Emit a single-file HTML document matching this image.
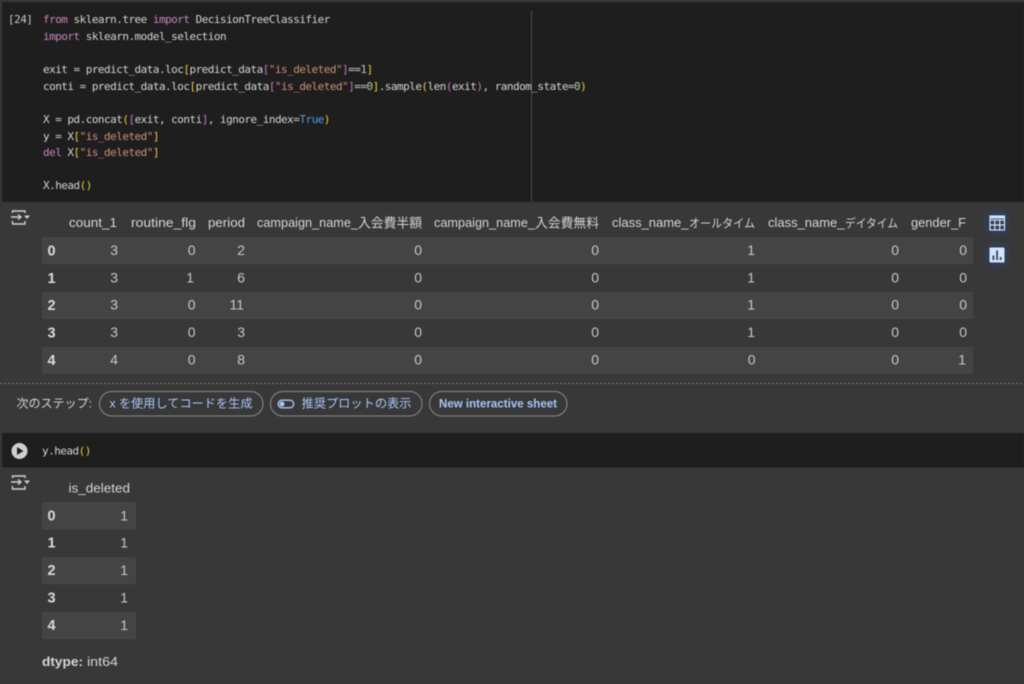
<!DOCTYPE html>
<html lang="ja">
<head>
<meta charset="utf-8">
<title>Notebook</title>
<style>
html,body{margin:0;padding:0;background:#383838;width:1024px;height:684px;overflow:hidden}
svg{display:block;filter:blur(.5px)}
.code{font-family:"DejaVu Sans Mono","Liberation Mono",monospace;font-size:11px;letter-spacing:-.52px;fill:#d4d4d4;white-space:pre}
.k{fill:#c586c0}.s{fill:#ce9178}.n{fill:#b5cea8}.g{fill:#f2cc30}.p{fill:#d070cc}.b{fill:#569cd6}
.ui{font-family:"Liberation Sans","Noto Sans CJK JP",sans-serif;font-size:13px;fill:#d6d6d6}
.cj{font-family:"Noto Sans CJK JP","Liberation Sans",sans-serif;font-size:12px;fill:#d6d6d6}
.idx{font-family:"Liberation Sans",sans-serif;font-size:14.5px;font-weight:700;fill:#dadada}
.num{font-family:"Liberation Sans",sans-serif;font-size:14px;fill:#c8c8c8;text-anchor:end}
.chip{fill:none;stroke:#8b8b8b;stroke-width:1}
.ct{font-family:"Liberation Sans","Noto Sans CJK JP",sans-serif;font-size:12px;fill:#a8c7fa}
</style>
</head>
<body>
<svg xmlns="http://www.w3.org/2000/svg" width="1024" height="684" viewBox="0 0 1024 684">
<rect width="1024" height="684" fill="#383838"/>

<!-- code cell 1 -->
<rect x="2" y="2" width="1022" height="200" fill="#1e1e1e"/>
<rect x="531" y="11" width="1" height="191" fill="#4a4a4a"/>
<text class="code" x="8" y="23" style="fill:#c8c8c8">[24]</text>
<text class="code" xml:space="preserve" x="43" y="23"><tspan class="k">from</tspan> sklearn.tree <tspan class="k">import</tspan> DecisionTreeClassifier</text>
<text class="code" xml:space="preserve" x="43" y="40"><tspan class="k">import</tspan> sklearn.model_selection</text>
<text class="code" xml:space="preserve" x="43" y="73">exit = predict_data.loc<tspan class="g">[</tspan>predict_data<tspan class="p">[</tspan><tspan class="s">"is_deleted"</tspan><tspan class="p">]</tspan>==<tspan class="n">1</tspan><tspan class="g">]</tspan></text>
<text class="code" xml:space="preserve" x="43" y="90">conti = predict_data.loc<tspan class="g">[</tspan>predict_data<tspan class="p">[</tspan><tspan class="s">"is_deleted"</tspan><tspan class="p">]</tspan>==<tspan class="n">0</tspan><tspan class="g">]</tspan>.sample<tspan class="g">(</tspan>len<tspan class="p">(</tspan>exit<tspan class="p">)</tspan>, random_state=<tspan class="n">0</tspan><tspan class="g">)</tspan></text>
<text class="code" xml:space="preserve" x="43" y="123">X = pd.concat<tspan class="g">(</tspan><tspan class="p">[</tspan>exit, conti<tspan class="p">]</tspan>, ignore_index=<tspan class="b">True</tspan><tspan class="g">)</tspan></text>
<text class="code" xml:space="preserve" x="43" y="140">y = X<tspan class="g">[</tspan><tspan class="s">"is_deleted"</tspan><tspan class="g">]</tspan></text>
<text class="code" xml:space="preserve" x="43" y="156"><tspan class="k">del</tspan> X<tspan class="g">[</tspan><tspan class="s">"is_deleted"</tspan><tspan class="g">]</tspan></text>
<text class="code" xml:space="preserve" x="43" y="189">X.head<tspan class="g">()</tspan></text>

<!-- output toggle icon 1 -->
<g fill="none" stroke="#d0d0d0" stroke-width="1.4">
<path d="M12.5 213V211H25V213"/>
<path d="M11 217H21M18 214.5L21 217L18 219.5"/>
<path d="M12.5 221V224H25V221"/>
</g>
<path d="M24 215.5H30L27 219Z" fill="#d0d0d0"/>

<!-- dataframe table -->
<rect x="42" y="237" width="931" height="27.3" fill="#444444"/>
<rect x="42" y="292" width="931" height="27" fill="#444444"/>
<rect x="42" y="347" width="931" height="27" fill="#444444"/>

<text class="ui" x="69" y="227" textLength="48" lengthAdjust="spacingAndGlyphs">count_1</text>
<text class="ui" x="131" y="227" textLength="65" lengthAdjust="spacingAndGlyphs">routine_flg</text>
<text class="ui" x="208" y="227" textLength="37" lengthAdjust="spacingAndGlyphs">period</text>
<text class="ui" x="257" y="227" textLength="101" lengthAdjust="spacingAndGlyphs">campaign_name_</text>
<text class="cj" x="358" y="227.500" textLength="64" lengthAdjust="spacingAndGlyphs" style="font-size:13px">入会費半額</text>
<text class="ui" x="434" y="227" textLength="101" lengthAdjust="spacingAndGlyphs">campaign_name_</text>
<text class="cj" x="535" y="227.500" textLength="64" lengthAdjust="spacingAndGlyphs" style="font-size:13px">入会費無料</text>
<text class="ui" x="612" y="227" textLength="76.500" lengthAdjust="spacingAndGlyphs">class_name_</text>
<text class="cj" x="689" y="227.500" textLength="66" lengthAdjust="spacingAndGlyphs">オールタイム</text>
<text class="ui" x="768" y="227" textLength="76.500" lengthAdjust="spacingAndGlyphs">class_name_</text>
<text class="cj" x="845" y="227.500" textLength="53" lengthAdjust="spacingAndGlyphs">デイタイム</text>
<text class="ui" x="911" y="227" textLength="55" lengthAdjust="spacingAndGlyphs">gender_F</text>

<g class="idx">
<text x="47.500" y="255.500">0</text><text x="47.500" y="283">1</text><text x="47.500" y="310">2</text><text x="47.500" y="337.500">3</text><text x="47.500" y="365">4</text>
</g>

<g class="num">
<text x="118" y="255">3</text><text x="195.500" y="255">0</text><text x="245" y="255">2</text><text x="422" y="255">0</text><text x="599" y="255">0</text><text x="755" y="255">1</text><text x="899" y="255">0</text><text x="967" y="255">0</text>
<text x="118" y="282.500">3</text><text x="194" y="282.500">1</text><text x="245" y="282.500">6</text><text x="422" y="282.500">0</text><text x="599" y="282.500">0</text><text x="755" y="282.500">1</text><text x="899" y="282.500">0</text><text x="967" y="282.500">0</text>
<text x="118" y="309.500">3</text><text x="195.500" y="309.500">0</text><text x="244" y="309.500">11</text><text x="422" y="309.500">0</text><text x="599" y="309.500">0</text><text x="755" y="309.500">1</text><text x="899" y="309.500">0</text><text x="967" y="309.500">0</text>
<text x="118" y="337">3</text><text x="195.500" y="337">0</text><text x="245" y="337">3</text><text x="422" y="337">0</text><text x="599" y="337">0</text><text x="755" y="337">1</text><text x="899" y="337">0</text><text x="967" y="337">0</text>
<text x="118" y="364.500">4</text><text x="195.500" y="364.500">0</text><text x="245" y="364.500">8</text><text x="422" y="364.500">0</text><text x="599" y="364.500">0</text><text x="755.500" y="364.500">0</text><text x="899" y="364.500">0</text><text x="966" y="364.500">1</text>
</g>

<!-- side buttons -->
<circle cx="997" cy="223" r="14" fill="#323c4e"/>
<g fill="none" stroke="#d2e3fc" stroke-width="1.2">
<rect x="990" y="216" width="14.500" height="14"/>
<path d="M990 220H1004.500M990 225H1004.500M994.800 220V230M999.700 220V230"/>
</g>
<path d="M990 216H1004.500V218.500H990Z" fill="#d2e3fc"/>
<circle cx="997" cy="255" r="14" fill="#323c4e"/>
<rect x="989.500" y="247.500" width="15" height="15" rx="1" fill="#d2e3fc"/>
<path d="M992.500 255.500H994.200V260H992.500ZM996.200 250.500H997.900V260H996.200ZM999.800 257H1001.500V260H999.800Z" fill="#323c4e"/>

<!-- dashed divider -->
<line x1="0" y1="383.500" x2="1024" y2="383.500" stroke="#7a7a7a" stroke-width="1" stroke-dasharray="2 2"/>

<!-- next steps -->
<text class="ui" x="16.500" y="407.500" textLength="75.500" lengthAdjust="spacingAndGlyphs" style="font-size:12px">次のステップ:</text>
<rect class="chip" x="99.500" y="391.500" width="163.500" height="24.500" rx="12.250"/>
<text class="ct" x="109.500" y="407.500" textLength="143" lengthAdjust="spacingAndGlyphs">x を使用してコードを生成</text>
<rect class="chip" x="270.500" y="391.500" width="151.500" height="24.500" rx="12.250"/>
<rect x="278.200" y="400.200" width="15.500" height="7.600" rx="3.800" fill="none" stroke="#a8c7fa" stroke-width="1.400"/>
<circle cx="282" cy="404" r="2.500" fill="#a8c7fa"/>
<text class="ct" x="301.500" y="407.500" textLength="110" lengthAdjust="spacingAndGlyphs">推奨プロットの表示</text>
<rect class="chip" x="429.500" y="391.500" width="137.500" height="24.500" rx="12.250"/>
<text class="ct" x="439" y="407.500" textLength="118" lengthAdjust="spacingAndGlyphs" style="font-weight:700">New interactive sheet</text>

<!-- code cell 2 -->
<rect x="2" y="433" width="1022" height="34.500" fill="#1e1e1e"/>
<circle cx="19.500" cy="451" r="8" fill="#d0d0d0"/>
<path d="M17 447L23.500 451L17 455Z" fill="#1e1e1e"/>
<text class="code" xml:space="preserve" x="42" y="454.500">y.head<tspan class="g">()</tspan></text>

<!-- output toggle icon 2 -->
<g fill="none" stroke="#d0d0d0" stroke-width="1.4">
<path d="M12.500 478V476H25V478"/>
<path d="M11 482H21M18 479.500L21 482L18 484.500"/>
<path d="M12.500 486V489H25V486"/>
</g>
<path d="M24 480.500H30L27 484Z" fill="#d0d0d0"/>

<!-- series table -->
<text class="ui" x="68.500" y="492.500" textLength="61.500" lengthAdjust="spacingAndGlyphs">is_deleted</text>
<rect x="42" y="502" width="94" height="27.700" fill="#444444"/>
<rect x="42" y="557" width="94" height="27.300" fill="#444444"/>
<rect x="42" y="611.700" width="94" height="27.300" fill="#444444"/>
<g class="idx">
<text x="47.500" y="520.500">0</text><text x="47.500" y="547.500">1</text><text x="47.500" y="575">2</text><text x="47.500" y="602.500">3</text><text x="47.500" y="630">4</text>
</g>
<g class="num">
<text x="128" y="520.500">1</text><text x="128" y="547.500">1</text><text x="128" y="575">1</text><text x="128" y="602.500">1</text><text x="128" y="630">1</text>
</g>
<text class="ui" x="42" y="666" style="font-weight:700" textLength="41" lengthAdjust="spacingAndGlyphs">dtype:</text>
<text class="ui" x="87" y="666" textLength="31" lengthAdjust="spacingAndGlyphs">int64</text>
</svg>
</body>
</html>
